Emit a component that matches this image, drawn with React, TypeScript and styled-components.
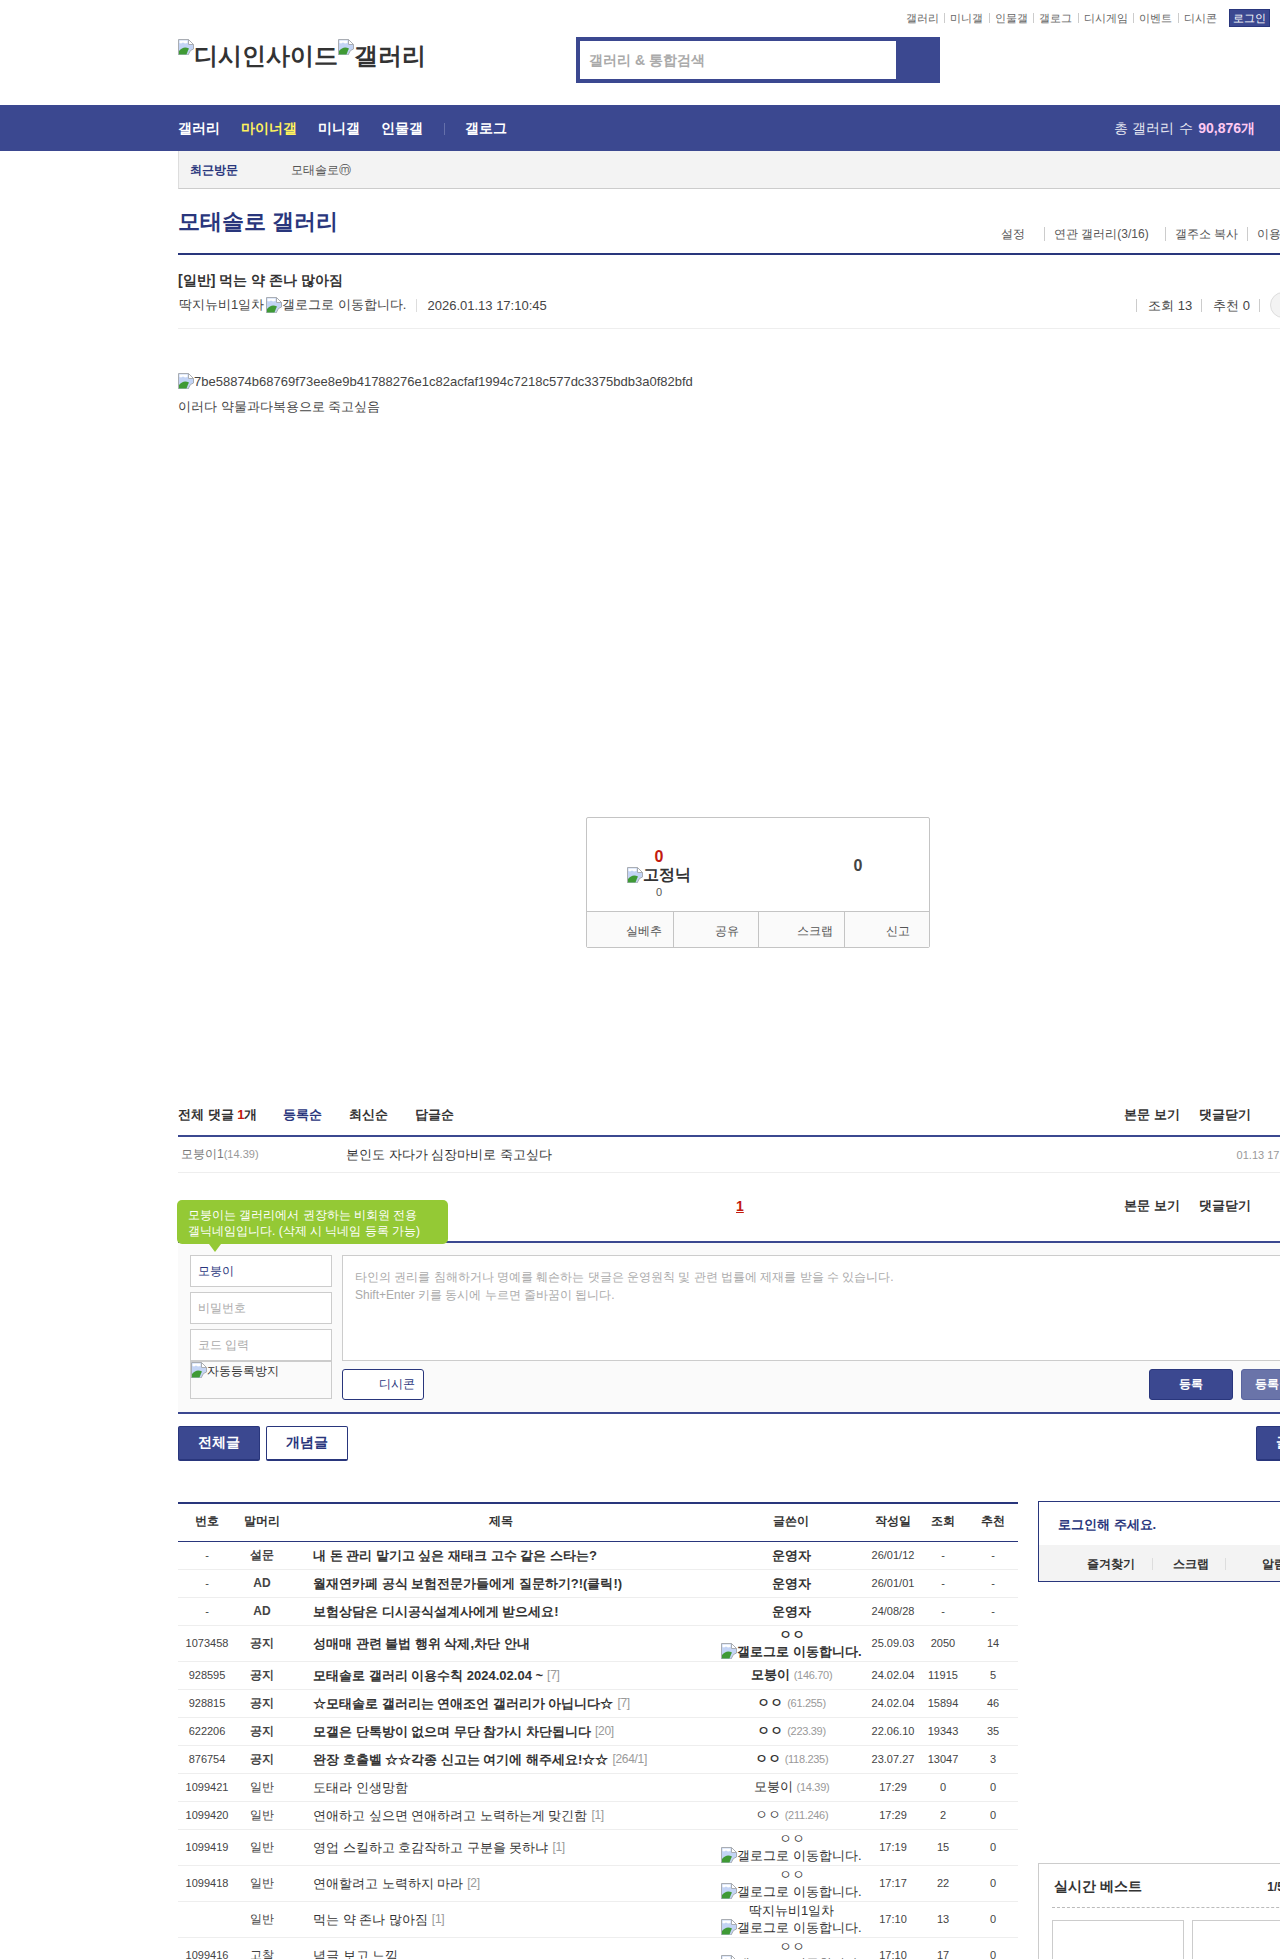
import React from 'react';
import styled, { createGlobalStyle } from 'styled-components';

const NAVY = '#3b4890';
const DARK = '#29367c';

const GlobalStyle = createGlobalStyle`
    html, body {
        margin: 0;
        padding: 0;
        height: 1959px;
        overflow: hidden;
        background: #fff;
    }
    body, input, textarea, button, table {
        font-family: "Liberation Sans", sans-serif;
        color: #333;
    }
    * {
        box-sizing: border-box;
    }
`;

const BrokenIcon = ({ className }: { className?: string }) => (
    <svg className={className} viewBox="0 0 16 16">
        <path d="M.5.5h10l5 5v4.500l-3 1.500-2.500 4.500H.5z" fill="#c3d4f5" stroke="#a9adb3" />
        <path d="M1.500 1.500h8v2.500l-2.500.5-2-1-2 1-1.500-.5z" fill="#fff" />
        <path d="M1 15.500v-3.500c3-3.500 6-4.500 10-2.500l-1 2-1.500 4z" fill="#3f9a35" />
        <path d="M10.500.5v5h5z" fill="#fff" stroke="#a9adb3" />
    </svg>
);

const Icon = styled(BrokenIcon)`
    width: 16px;
    height: 16px;
    display: inline-block;
    vertical-align: -3px;
`;

const LogoIcon = styled(Icon)`
    vertical-align: 9px;
`;

const MetaIcon = styled(Icon)`
    margin-left: 2px;
    flex: none;
`;

const Shell = styled.div`
    width: 1280px;
    height: 1959px;
    overflow: hidden;
`;

const Header = styled.header`
    height: 105px;
    padding-left: 178px;
`;

const TopRow = styled.div`
    width: 1092px;
    height: 37px;
    padding-top: 9px;
    display: flex;
    justify-content: flex-end;
    align-items: flex-start;
`;

const TopLink = styled.a<{ $first?: boolean }>`
    font-size: 11px;
    line-height: 18px;
    color: #666;
    padding: 0 5.5px 0 6px;
    position: relative;
    &::before {
        content: '';
        display: ${(p) => (p.$first ? 'none' : 'block')};
        position: absolute;
        left: 0;
        top: 4px;
        height: 10px;
        border-left: 1px solid #ccc;
    }
`;

const LoginButton = styled.a`
    margin-left: 7px;
    width: 41px;
    height: 18px;
    background: ${NAVY};
    border: 1px solid ${DARK};
    color: #fff;
    font-size: 11px;
    line-height: 16px;
    text-align: center;
`;

const LogoRow = styled.div`
    display: grid;
    grid-template-columns: 398px 364px;
`;

const Logo = styled.h1`
    margin: 0;
    font-size: 24px;
    font-weight: 700;
    line-height: 28px;
    height: 28px;
    padding-top: 2px;
    white-space: nowrap;
`;

const SearchBox = styled.form`
    width: 364px;
    height: 46px;
    background: ${NAVY};
    padding: 4px 44px 4px 4px;
`;

const SearchInput = styled.input`
    width: 100%;
    height: 100%;
    border: 0;
    padding: 0 8px 0 9px;
    font-size: 14px;
    font-weight: 700;
    outline: none;
    &::placeholder {
        color: #aaa;
        opacity: 1;
    }
`;

const Nav = styled.nav`
    height: 46px;
    background: ${NAVY};
    padding: 2px 25px 0 178px;
    display: flex;
    align-items: center;
`;

const NavItem = styled.a<{ $on?: boolean }>`
    font-size: 14px;
    font-weight: 700;
    color: ${(p) => (p.$on ? '#fff25c' : '#fff')};
    margin-right: 21px;
`;

const NavSep = styled.span`
    height: 12px;
    border-left: 1px solid #6570aa;
    margin-right: 20px;
`;

const GalleryCount = styled.div`
    margin-left: auto;
    font-size: 14px;
    word-spacing: 1px;
    color: #e8e8f2;
    b {
        color: #ffc9f2;
    }
`;

const Main = styled.main`
    margin-left: 178px;
    width: 1160px;
`;

const RecentBar = styled.div`
    height: 38px;
    background: #f3f3f3;
    border-left: 1px solid #ddd;
    border-bottom: 1px solid #ccc;
    display: flex;
    align-items: center;
    padding: 1px 0 0 11px;
    font-size: 12px;
`;

const RecentLabel = styled.b`
    width: 101px;
    color: ${DARK};
`;

const RecentLink = styled.a`
    color: #555;
`;

const GalleryTitleRow = styled.div`
    height: 66px;
    border-bottom: 2px solid ${DARK};
    display: flex;
    justify-content: space-between;
    align-items: flex-end;
`;

const GalleryTitle = styled.h2`
    margin: 0 0 12px;
    font-size: 22px;
    line-height: 38px;
    font-weight: 700;
    color: ${DARK};
`;

const TitleLinks = styled.div`
    display: flex;
    padding: 0 24px 12px 0;
`;

const TitleLink = styled.a<{ $gap?: number; $first?: boolean }>`
    font-size: 12px;
    color: #555;
    line-height: 14px;
    padding: 0 ${(p) => p.$gap ?? 9}px 0 9px;
    border-left: ${(p) => (p.$first ? '0' : '1px solid #ccc')};
    white-space: nowrap;
`;

const PostHead = styled.div`
    height: 74px;
    border-bottom: 1px solid #eee;
    padding-top: 16px;
`;

const PostTitle = styled.h3`
    margin: 0;
    font-size: 14px;
    line-height: 18px;
    font-weight: 700;
`;

const PostMeta = styled.div`
    margin-top: 3px;
    padding-left: 1px;
    display: flex;
    align-items: center;
    font-size: 13px;
    line-height: 18px;
    color: #444;
`;

const MetaDate = styled.span`
    margin-left: 10px;
    padding-left: 10px;
    border-left: 1px solid #ddd;
    line-height: 13px;
`;

const MetaStats = styled.div`
    margin-left: auto;
    display: flex;
    align-items: center;
`;

const MetaStat = styled.span`
    padding: 0 9px 0 11px;
    border-left: 1px solid #ccc;
    line-height: 13px;
    white-space: nowrap;
`;

const MetaEnd = styled.span`
    height: 13px;
    border-left: 1px solid #ccc;
`;

const RoundButton = styled.span`
    width: 26px;
    height: 26px;
    margin: 0 42px 0 10px;
    border-radius: 50%;
    background: #f3f3f3;
    border: 1px solid #ddd;
`;

const PostBody = styled.div`
    height: 488px;
    padding-top: 43px;
    font-size: 13px;
    line-height: 20px;
    color: #444;
`;

const AltLine = styled.div`
    height: 25px;
`;

const VoteBox = styled.div`
    width: 344px;
    height: 131px;
    margin-left: 408px;
    border: 1px solid #c4c4c4;
    border-radius: 2px;
    display: flex;
    flex-direction: column;
`;

const VoteTop = styled.div`
    height: 93px;
    display: grid;
    grid-template-columns: 144px 1fr;
    align-items: center;
    text-align: center;
`;

const VoteCell = styled.div`
    padding-top: 18px;
`;

const VoteCount = styled.div<{ $red?: boolean; $side?: boolean }>`
    font-size: 16px;
    line-height: 16px;
    font-weight: 700;
    color: ${(p) => (p.$red ? '#c31a0f' : '#444')};
    padding: ${(p) => (p.$side ? '2px 0 0 56px' : '0')};
    width: ${(p) => (p.$side ? '198px' : 'auto')};
`;

const VoteNick = styled.div`
    font-size: 16px;
    line-height: 20px;
    font-weight: 700;
    white-space: nowrap;
`;

const VoteSub = styled.div`
    font-size: 11px;
    line-height: 14px;
    color: #555;
`;

const VoteBottom = styled.div`
    flex: 1;
    display: grid;
    grid-template-columns: repeat(4, 1fr);
    border-top: 1px solid #c4c4c4;
    background: #fafafa;
`;

const VoteAction = styled.a<{ $tight?: boolean }>`
    font-size: 12px;
    color: #555;
    text-align: right;
    padding: 11px ${(p) => (p.$tight ? 11 : 19)}px 0 0;
    & + & {
        border-left: 1px solid #c4c4c4;
    }
`;

const CommentHead = styled.div<{ $height: number; $pad: number }>`
    height: ${(p) => p.$height}px;
    margin-top: ${(p) => p.$pad}px;
    display: flex;
    align-items: flex-start;
    font-size: 13px;
    line-height: 16px;
    position: relative;
`;

const CommentTotal = styled.b`
    width: 105px;
    white-space: nowrap;
    em {
        color: #c31a0f;
        font-style: normal;
    }
`;

const SortTab = styled.a<{ $on?: boolean }>`
    font-weight: 700;
    color: ${(p) => (p.$on ? DARK : '#333')};
    margin-right: 27px;
`;

const CommentTools = styled.div`
    margin-left: auto;
    display: flex;
`;

const ToolLink = styled.a<{ $wide?: boolean }>`
    font-weight: 700;
    padding: 0 ${(p) => (p.$wide ? 24 : 8)}px 0 11px;
    position: relative;
    white-space: nowrap;
    & + &::before {
        content: '';
        position: absolute;
        left: 0;
        top: 0;
        height: 12px;
        border-left: 1px solid #ccc;
    }
    &:last-child {
        padding-right: 0;
    }
`;

const CommentList = styled.div`
    border-top: 2px solid ${NAVY};
`;

const CommentRow = styled.div`
    height: 36px;
    border-bottom: 1px solid #eee;
    display: flex;
    align-items: center;
    font-size: 12px;
`;

const CommentAuthor = styled.div`
    width: 168px;
    padding-left: 3px;
    color: #777;
    small {
        font-size: 11px;
        color: #999;
    }
`;

const CommentText = styled.div`
    flex: 1;
    font-size: 13px;
`;

const CommentDate = styled.div`
    font-size: 11px;
    color: #999;
    margin-right: 28px;
`;

const PageNumber = styled.a`
    position: absolute;
    left: 558px;
    top: 0;
    font-size: 14px;
    font-weight: 700;
    color: #c31a0f;
    text-decoration: underline;
`;

const WriteForm = styled.div`
    position: relative;
    height: 173px;
    background: #fafafa;
    border-top: 2px solid ${NAVY};
    border-bottom: 2px solid ${NAVY};
    padding: 12px 13px 0 12px;
    display: grid;
    grid-template-columns: 142px 1fr;
    column-gap: 10px;
`;

const Tooltip = styled.div`
    position: absolute;
    left: -1px;
    top: -43px;
    width: 271px;
    height: 44px;
    padding: 7px 0 0 11px;
    border-radius: 5px;
    background: #94c935;
    color: #fff;
    font-size: 12px;
    line-height: 16px;
    white-space: nowrap;
    &::after {
        content: '';
        position: absolute;
        left: 32px;
        top: 44px;
        border: 6px solid transparent;
        border-top: 8px solid #94c935;
        border-bottom: 0;
    }
`;

const AuthColumn = styled.div`
    display: flex;
    flex-direction: column;
    gap: 5px;
`;

const FormInput = styled.input`
    width: 142px;
    height: 32px;
    border: 1px solid #ccc;
    background: #fff;
    padding: 0 7px;
    font-size: 12px;
    color: ${DARK};
    outline: none;
    &::placeholder {
        color: #aaa;
        opacity: 1;
    }
`;

const CaptchaBox = styled.div`
    margin-top: -5px;
    height: 38px;
    border: 1px solid #ccc;
    background: #fafafa;
    font-size: 12px;
    line-height: 16px;
    color: #333;
    white-space: nowrap;
`;

const EditorColumn = styled.div`
    display: flex;
    flex-direction: column;
`;

const Editor = styled.textarea`
    height: 106px;
    border: 1px solid #ccc;
    background: #fff;
    padding: 12px 12px;
    font-size: 12px;
    line-height: 18px;
    resize: none;
    outline: none;
    &::placeholder {
        color: #aaa;
        opacity: 1;
    }
`;

const EditorActions = styled.div`
    margin-top: 8px;
    display: flex;
`;

const DcconButton = styled.button`
    width: 82px;
    height: 31px;
    background: #fff;
    border: 1px solid ${DARK};
    border-radius: 3px;
    color: ${DARK};
    font-size: 12px;
    text-align: right;
    padding: 0 8px 0 0;
`;

const SubmitButton = styled.button<{ $muted?: boolean }>`
    width: 84px;
    height: 31px;
    margin-left: ${(p) => (p.$muted ? '8px' : 'auto')};
    background: ${(p) => (p.$muted ? '#6a74a9' : NAVY)};
    border: 1px solid ${(p) => (p.$muted ? '#5a659f' : DARK)};
    border-radius: 3px;
    color: #fff;
    font-size: 12px;
    font-weight: 700;
    padding: 0;
`;

const ListTabs = styled.div`
    margin-top: 12px;
    display: flex;
    gap: 6px;
`;

const TabButton = styled.button<{ $line?: boolean; $right?: boolean }>`
    width: 82px;
    height: 35px;
    margin-left: ${(p) => (p.$right ? 'auto' : '0')};
    background: ${(p) => (p.$line ? '#fff' : NAVY)};
    color: ${(p) => (p.$line ? DARK : '#fff')};
    border: 1px solid ${DARK};
    border-bottom-width: 2px;
    border-radius: 2px;
    font-size: 14px;
    font-weight: 700;
    padding: 0;
`;

const ListArea = styled.div`
    margin-top: 40px;
    display: grid;
    grid-template-columns: 840px 300px;
    column-gap: 20px;
    align-items: start;
`;

const BoardTable = styled.table`
    width: 840px;
    margin-top: 1px;
    table-layout: fixed;
    border-collapse: collapse;
    border-top: 2px solid ${DARK};
`;

const HeadCell = styled.th<{ $width: number }>`
    width: ${(p) => p.$width}px;
    height: 38px;
    padding: 0 0 2px;
    border-bottom: 1px solid ${DARK};
    font-size: 12px;
    font-weight: 700;
    color: #333;
`;

const Row = styled.tr<{ $tall?: boolean }>`
    height: ${(p) => (p.$tall ? 36 : 28)}px;
`;

const Cell = styled.td<{ $bold?: boolean }>`
    padding: 0;
    border-bottom: 1px solid #eee;
    text-align: center;
    font-size: 11px;
    line-height: 17px;
    color: #444;
    font-weight: ${(p) => (p.$bold ? 700 : 400)};
    white-space: nowrap;
`;

const HeadLabelCell = styled(Cell)`
    font-size: 12px;
`;

const SubjectCell = styled(Cell)`
    text-align: left;
    padding-left: 25px;
    font-size: 13px;
    color: #333;
`;

const ReplyCount = styled.span`
    margin-left: 4px;
    font-size: 12px;
    font-weight: 400;
    color: #999;
    vertical-align: 1px;
    letter-spacing: -0.3px;
`;

const WriterCell = styled(Cell)`
    padding-left: 1px;
    font-size: 13px;
    color: #333;
`;

const WriterIp = styled.small`
    margin-left: 4px;
    font-size: 11px;
    font-weight: 400;
    color: #999;
    letter-spacing: -0.3px;
`;

const SideColumn = styled.aside``;

const LoginPanel = styled.div`
    height: 81px;
    border: 1px solid ${DARK};
`;

const LoginHint = styled.div`
    height: 43px;
    padding: 15px 0 0 19px;
    font-size: 13px;
    line-height: 16px;
    font-weight: 700;
    color: ${DARK};
`;

const LoginMenu = styled.div`
    height: 36px;
    background: #f3f3f3;
    display: flex;
    align-items: center;
    padding-top: 1px;
`;

const LoginMenuItem = styled.a<{ $width: number; $pad: number }>`
    width: ${(p) => p.$width}px;
    padding-left: ${(p) => p.$pad}px;
    font-size: 12px;
    font-weight: 700;
    line-height: 12px;
    & + & {
        border-left: 1px solid #ddd;
    }
`;

const BestPanel = styled.div`
    margin-top: 281px;
    height: 260px;
    border: 1px solid #ccc;
    padding: 0 13px;
`;

const BestHead = styled.div`
    height: 44px;
    border-bottom: 1px dashed #bbb;
    display: flex;
    justify-content: space-between;
    align-items: center;
    padding: 2px 0 0 2px;
    font-size: 14px;
    font-weight: 700;
    small {
        font-size: 12px;
        margin-right: 40px;
    }
`;

const BestGrid = styled.div`
    margin-top: 12px;
    display: grid;
    grid-template-columns: 132px 132px;
    column-gap: 8px;
`;

const BestCard = styled.div`
    height: 160px;
    border: 1px solid #ccc;
`;

type BoardRow = {
    no: string;
    head: string;
    subject: string;
    replies?: string;
    writer: string;
    ip?: string;
    gallog?: boolean;
    date: string;
    views: string;
    votes: string;
    bold?: boolean;
    tall?: boolean;
    writerBold?: boolean;
};

const rows: BoardRow[] = [
    { no: '-', head: '설문', subject: '내 돈 관리 맡기고 싶은 재태크 고수 같은 스타는?', writer: '운영자', date: '26/01/12', views: '-', votes: '-', bold: true, writerBold: true },
    { no: '-', head: 'AD', subject: '월재연카페 공식 보험전문가들에게 질문하기?!(클릭!)', writer: '운영자', date: '26/01/01', views: '-', votes: '-', bold: true, writerBold: true },
    { no: '-', head: 'AD', subject: '보험상담은 디시공식설계사에게 받으세요!', writer: '운영자', date: '24/08/28', views: '-', votes: '-', bold: true, writerBold: true },
    { no: '1073458', head: '공지', subject: '성매매 관련 불법 행위 삭제,차단 안내', writer: 'ㅇㅇ', gallog: true, date: '25.09.03', views: '2050', votes: '14', bold: true, tall: true, writerBold: true },
    { no: '928595', head: '공지', subject: '모태솔로 갤러리 이용수칙 2024.02.04 ~', replies: '[7]', writer: '모붕이', ip: '(146.70)', date: '24.02.04', views: '11915', votes: '5', bold: true, writerBold: true },
    { no: '928815', head: '공지', subject: '☆모태솔로 갤러리는 연애조언 갤러리가 아닙니다☆', replies: '[7]', writer: 'ㅇㅇ', ip: '(61.255)', date: '24.02.04', views: '15894', votes: '46', bold: true, writerBold: true },
    { no: '622206', head: '공지', subject: '모갤은 단톡방이 없으며 무단 참가시 차단됩니다', replies: '[20]', writer: 'ㅇㅇ', ip: '(223.39)', date: '22.06.10', views: '19343', votes: '35', bold: true, writerBold: true },
    { no: '876754', head: '공지', subject: '완장 호출벨 ☆☆각종 신고는 여기에 해주세요!☆☆', replies: '[264/1]', writer: 'ㅇㅇ', ip: '(118.235)', date: '23.07.27', views: '13047', votes: '3', bold: true, writerBold: true },
    { no: '1099421', head: '일반', subject: '도태라 인생망함', writer: '모붕이', ip: '(14.39)', date: '17:29', views: '0', votes: '0' },
    { no: '1099420', head: '일반', subject: '연애하고 싶으면 연애하려고 노력하는게 맞긴함', replies: '[1]', writer: 'ㅇㅇ', ip: '(211.246)', date: '17:29', views: '2', votes: '0' },
    { no: '1099419', head: '일반', subject: '영업 스킬하고 호감작하고 구분을 못하냐', replies: '[1]', writer: 'ㅇㅇ', gallog: true, date: '17:19', views: '15', votes: '0', tall: true },
    { no: '1099418', head: '일반', subject: '연애할려고 노력하지 마라', replies: '[2]', writer: 'ㅇㅇ', gallog: true, date: '17:17', views: '22', votes: '0', tall: true },
    { no: '', head: '일반', subject: '먹는 약 존나 많아짐', replies: '[1]', writer: '딱지뉴비1일차', gallog: true, date: '17:10', views: '13', votes: '0', tall: true },
    { no: '1099416', head: '고찰', subject: '념글 보고 느낌', writer: 'ㅇㅇ', gallog: true, date: '17:10', views: '17', votes: '0', tall: true },
];

const topLinks = ['갤러리', '미니갤', '인물갤', '갤로그', '디시게임', '이벤트', '디시콘'];

const columns = [
    { label: '번호', width: 58 },
    { label: '말머리', width: 52 },
    { label: '제목', width: 426 },
    { label: '글쓴이', width: 154 },
    { label: '작성일', width: 50 },
    { label: '조회', width: 50 },
    { label: '추천', width: 50 },
];

const placeholder =
    '타인의 권리를 침해하거나 명예를 훼손하는 댓글은 운영원칙 및 관련 법률에 제재를 받을 수 있습니다.\nShift+Enter 키를 동시에 누르면 줄바꿈이 됩니다.';

const App = () => (
    <Shell>
        <GlobalStyle />
        <Header>
            <TopRow>
                {topLinks.map((label, i) => (
                    <TopLink key={label} $first={i === 0}>
                        {label}
                    </TopLink>
                ))}
                <LoginButton>로그인</LoginButton>
            </TopRow>
            <LogoRow>
                <Logo>
                    <LogoIcon />
                    디시인사이드
                    <LogoIcon />
                    갤러리
                </Logo>
                <SearchBox>
                    <SearchInput placeholder="갤러리 & 통합검색" />
                </SearchBox>
            </LogoRow>
        </Header>
        <Nav>
            <NavItem>갤러리</NavItem>
            <NavItem $on>마이너갤</NavItem>
            <NavItem>미니갤</NavItem>
            <NavItem>인물갤</NavItem>
            <NavSep />
            <NavItem>갤로그</NavItem>
            <GalleryCount>
                총 갤러리 수 <b>90,876개</b>
            </GalleryCount>
        </Nav>
        <Main>
            <RecentBar>
                <RecentLabel>최근방문</RecentLabel>
                <RecentLink>모태솔로ⓜ</RecentLink>
            </RecentBar>
            <GalleryTitleRow>
                <GalleryTitle>모태솔로 갤러리</GalleryTitle>
                <TitleLinks>
                    <TitleLink $first $gap={19}>
                        설정
                    </TitleLink>
                    <TitleLink $gap={16}>연관 갤러리(3/16)</TitleLink>
                    <TitleLink>갤주소 복사</TitleLink>
                    <TitleLink>이용안내</TitleLink>
                </TitleLinks>
            </GalleryTitleRow>
            <PostHead>
                <PostTitle>[일반] 먹는 약 존나 많아짐</PostTitle>
                <PostMeta>
                    딱지뉴비1일차
                    <MetaIcon />
                    갤로그로 이동합니다.
                    <MetaDate>2026.01.13 17:10:45</MetaDate>
                    <MetaStats>
                        <MetaStat>조회 13</MetaStat>
                        <MetaStat>추천 0</MetaStat>
                        <MetaEnd />
                        <RoundButton />
                    </MetaStats>
                </PostMeta>
            </PostHead>
            <PostBody>
                <AltLine>
                    <Icon />
                    7be58874b68769f73ee8e9b41788276e1c82acfaf1994c7218c577dc3375bdb3a0f82bfd
                </AltLine>
                이러다 약물과다복용으로 죽고싶음
            </PostBody>
            <VoteBox>
                <VoteTop>
                    <VoteCell>
                        <VoteCount $red>0</VoteCount>
                        <VoteNick>
                            <Icon />
                            고정닉
                        </VoteNick>
                        <VoteSub>0</VoteSub>
                    </VoteCell>
                    <VoteCount $side>0</VoteCount>
                </VoteTop>
                <VoteBottom>
                    <VoteAction $tight>실베추</VoteAction>
                    <VoteAction>공유</VoteAction>
                    <VoteAction $tight>스크랩</VoteAction>
                    <VoteAction>신고</VoteAction>
                </VoteBottom>
            </VoteBox>
            <CommentHead $height={28} $pad={159}>
                <CommentTotal>
                    전체 댓글 <em>1</em>개
                </CommentTotal>
                <SortTab $on>등록순</SortTab>
                <SortTab>최신순</SortTab>
                <SortTab>답글순</SortTab>
                <CommentTools>
                    <ToolLink>본문 보기</ToolLink>
                    <ToolLink $wide>댓글닫기</ToolLink>
                    <ToolLink>새로고침</ToolLink>
                </CommentTools>
            </CommentHead>
            <CommentList>
                <CommentRow>
                    <CommentAuthor>
                        모붕이1<small>(14.39)</small>
                    </CommentAuthor>
                    <CommentText>본인도 자다가 심장마비로 죽고싶다</CommentText>
                    <CommentDate>01.13 17:29:06</CommentDate>
                </CommentRow>
            </CommentList>
            <CommentHead $height={43} $pad={25}>
                <PageNumber>1</PageNumber>
                <CommentTools>
                    <ToolLink>본문 보기</ToolLink>
                    <ToolLink $wide>댓글닫기</ToolLink>
                    <ToolLink>새로고침</ToolLink>
                </CommentTools>
            </CommentHead>
            <WriteForm>
                <Tooltip>
                    모붕이는 갤러리에서 권장하는 비회원 전용
                    <br />
                    갤닉네임입니다. (삭제 시 닉네임 등록 가능)
                </Tooltip>
                <AuthColumn>
                    <FormInput defaultValue="모붕이" />
                    <FormInput placeholder="비밀번호" />
                    <FormInput placeholder="코드 입력" />
                    <CaptchaBox>
                        <Icon />
                        자동등록방지
                    </CaptchaBox>
                </AuthColumn>
                <EditorColumn>
                    <Editor placeholder={placeholder} />
                    <EditorActions>
                        <DcconButton>디시콘</DcconButton>
                        <SubmitButton>등록</SubmitButton>
                        <SubmitButton $muted>등록+추천</SubmitButton>
                    </EditorActions>
                </EditorColumn>
            </WriteForm>
            <ListTabs>
                <TabButton>전체글</TabButton>
                <TabButton $line>개념글</TabButton>
                <TabButton $right>글쓰기</TabButton>
            </ListTabs>
            <ListArea>
                <BoardTable>
                    <thead>
                        <tr>
                            {columns.map((c) => (
                                <HeadCell key={c.label} $width={c.width}>
                                    {c.label}
                                </HeadCell>
                            ))}
                        </tr>
                    </thead>
                    <tbody>
                        {rows.map((r) => (
                            <Row key={r.subject} $tall={r.tall}>
                                <Cell>{r.no}</Cell>
                                <HeadLabelCell $bold={r.bold}>{r.head}</HeadLabelCell>
                                <SubjectCell $bold={r.bold}>
                                    {r.subject}
                                    {r.replies && <ReplyCount>{r.replies}</ReplyCount>}
                                </SubjectCell>
                                <WriterCell $bold={r.writerBold}>
                                    {r.writer}
                                    {r.ip && <WriterIp>{r.ip}</WriterIp>}
                                    {r.gallog && (
                                        <>
                                            <br />
                                            <Icon />
                                            갤로그로 이동합니다.
                                        </>
                                    )}
                                </WriterCell>
                                <Cell>{r.date}</Cell>
                                <Cell>{r.views}</Cell>
                                <Cell>{r.votes}</Cell>
                            </Row>
                        ))}
                    </tbody>
                </BoardTable>
                <SideColumn>
                    <LoginPanel>
                        <LoginHint>로그인해 주세요.</LoginHint>
                        <LoginMenu>
                            <LoginMenuItem $width={113} $pad={48}>
                                즐겨찾기
                            </LoginMenuItem>
                            <LoginMenuItem $width={73} $pad={20}>
                                스크랩
                            </LoginMenuItem>
                            <LoginMenuItem $width={100} $pad={36}>
                                알림
                            </LoginMenuItem>
                        </LoginMenu>
                    </LoginPanel>
                    <BestPanel>
                        <BestHead>
                            실시간 베스트
                            <small>1/5</small>
                        </BestHead>
                        <BestGrid>
                            <BestCard />
                            <BestCard />
                        </BestGrid>
                    </BestPanel>
                </SideColumn>
            </ListArea>
        </Main>
    </Shell>
);

export default App;
